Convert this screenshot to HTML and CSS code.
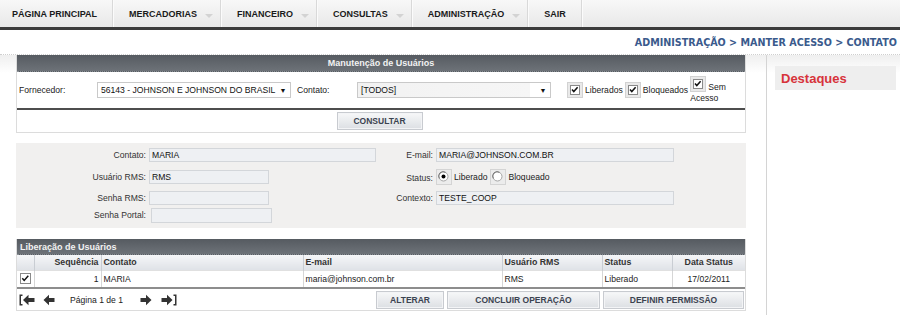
FILE: index.html
```html
<!DOCTYPE html>
<html lang="pt-BR">
<head>
<meta charset="utf-8">
<title>Manter Acesso - Contato</title>
<link rel="stylesheet" href="styles.css">
</head>
<body>
<nav class="nav">
  <a class="nav-item">PÁGINA PRINCIPAL</a>
  <a class="nav-item has-sub">MERCADORIAS<span class="caret"></span></a>
  <a class="nav-item has-sub">FINANCEIRO<span class="caret"></span></a>
  <a class="nav-item has-sub">CONSULTAS<span class="caret"></span></a>
  <a class="nav-item has-sub">ADMINISTRAÇÃO<span class="caret"></span></a>
  <a class="nav-item">SAIR</a>
</nav>
<div class="crumb">ADMINISTRAÇÃO &gt; MANTER ACESSO &gt; CONTATO</div>
<div class="page">
  <main class="main">
    <section class="panel filter">
      <div class="phead center">Manutenção de Usuários</div>
      <div class="frow">
        <span class="flabel l1">Fornecedor:</span>
        <div class="select s1"><span class="sel-text">56143 - JOHNSON E JOHNSON DO BRASIL</span><span class="sel-arrow">▼</span></div>
        <span class="flabel l2">Contato:</span>
        <div class="select s2"><span class="sel-text shaded">[TODOS]</span><span class="sel-arrow">▼</span></div>
        <div class="checks">
          <label class="chk"><svg class="cb" viewBox="0 0 16 16"><rect x="0.5" y="0.5" width="15" height="15" fill="#e9e9e9" stroke="#d2d2d2"/><rect x="3.5" y="3.5" width="9" height="9" fill="#fff" stroke="#8a8a8a"/><path d="M5 7.5 L6.8 9.6 L10.6 5.3" fill="none" stroke="#111" stroke-width="1.5"/></svg>Liberados</label>
          <label class="chk"><svg class="cb" viewBox="0 0 16 16"><rect x="0.5" y="0.5" width="15" height="15" fill="#e9e9e9" stroke="#d2d2d2"/><rect x="3.5" y="3.5" width="9" height="9" fill="#fff" stroke="#8a8a8a"/><path d="M5 7.5 L6.8 9.6 L10.6 5.3" fill="none" stroke="#111" stroke-width="1.5"/></svg>Bloqueados</label>
          <label class="chk wrap"><svg class="cb" viewBox="0 0 16 16"><rect x="0.5" y="0.5" width="15" height="15" fill="#e9e9e9" stroke="#d2d2d2"/><rect x="3.5" y="3.5" width="9" height="9" fill="#fff" stroke="#8a8a8a"/><path d="M5 7.5 L6.8 9.6 L10.6 5.3" fill="none" stroke="#111" stroke-width="1.5"/></svg>Sem Acesso</label>
        </div>
      </div>
      <div class="actions">
        <button class="btn consultar">CONSULTAR</button>
      </div>
    </section>

    <section class="detail">
      <span class="dl">Contato:</span>
      <div class="inp w-contato">MARIA</div>
      <span class="dl">E-mail:</span>
      <div class="inp w-email">MARIA@JOHNSON.COM.BR</div>

      <span class="dl">Usuário RMS:</span>
      <div class="inp w-short">RMS</div>
      <span class="dl dl-status">Status:</span>
      <div class="radios">
        <label class="rad"><svg class="rb" viewBox="0 0 16 16"><rect x="0.5" y="0.5" width="15" height="15" fill="#ececec" stroke="#d4d4d4"/><circle cx="7.5" cy="7.5" r="4.5" fill="#fff" stroke="#a5a5a5"/><path d="M3.3 9.5 A4.5 4.5 0 0 1 9.5 3.3" fill="none" stroke="#777"/><circle cx="7.5" cy="7.5" r="2" fill="#000"/></svg>Liberado</label>
        <label class="rad"><svg class="rb" viewBox="0 0 16 16"><rect x="0.5" y="0.5" width="15" height="15" fill="#ececec" stroke="#d4d4d4"/><circle cx="7.5" cy="7.5" r="4.5" fill="#fff" stroke="#a5a5a5"/><path d="M3.3 9.5 A4.5 4.5 0 0 1 9.5 3.3" fill="none" stroke="#777"/></svg>Bloqueado</label>
      </div>

      <span class="dl">Senha RMS:</span>
      <div class="inp w-short"></div>
      <span class="dl">Contexto:</span>
      <div class="inp w-email">TESTE_COOP</div>

      <span class="dl">Senha Portal:</span>
      <div class="inp w-portal"></div>
      <span></span>
      <span></span>
    </section>

    <section class="panel list">
      <div class="phead">Liberação de Usuários</div>
      <table class="grid">
        <colgroup>
          <col class="c-chk"><col class="c-seq"><col class="c-con"><col class="c-mail"><col class="c-usr"><col class="c-st"><col class="c-dt">
        </colgroup>
        <thead>
          <tr>
            <th></th>
            <th class="r">Sequência</th>
            <th>Contato</th>
            <th>E-mail</th>
            <th>Usuário RMS</th>
            <th>Status</th>
            <th class="c">Data Status</th>
          </tr>
        </thead>
        <tbody>
          <tr>
            <td class="chkcell"><svg class="tcb" viewBox="0 0 11 11"><rect x="0.5" y="0.5" width="10" height="10" fill="#fff" stroke="#8a8a8a"/><path d="M2.3 5.2 L4.2 7.4 L8.3 2.8" fill="none" stroke="#111" stroke-width="1.5"/></svg></td>
            <td class="r">1</td>
            <td>MARIA</td>
            <td>maria@johnson.com.br</td>
            <td>RMS</td>
            <td>Liberado</td>
            <td class="c">17/02/2011</td>
          </tr>
        </tbody>
      </table>
      <div class="pager">
        <div class="nav-icons">
          <svg class="pg first" viewBox="0 0 16 12"><path d="M0.5 0.5 H3.5 V2 H2 V10 H3.5 V11.5 H0.5 Z" fill="#333"/><path d="M4 6 L9.5 0.8 L9.5 4 L15.5 4 L15.5 8 L9.5 8 L9.5 11.2 Z" fill="#333"/></svg>
          <svg class="pg prev" viewBox="0 0 12 12"><path d="M0.5 6 L6 0.8 L6 4 L11.5 4 L11.5 8 L6 8 L6 11.2 Z" fill="#333"/></svg>
          <span class="pinfo">Página 1 de 1</span>
          <svg class="pg next" viewBox="0 0 12 12"><path d="M11.5 6 L6 0.8 L6 4 L0.5 4 L0.5 8 L6 8 L6 11.2 Z" fill="#333"/></svg>
          <svg class="pg last" viewBox="0 0 16 12"><path d="M11.5 6 L6 0.8 L6 4 L0.5 4 L0.5 8 L6 8 L6 11.2 Z" fill="#333"/><path d="M15.5 0.5 H12.5 V2 H14 V10 H12.5 V11.5 H15.5 Z" fill="#333"/></svg>
        </div>
        <div class="pbtns">
          <button class="btn b-alt">ALTERAR</button>
          <button class="btn b-conc">CONCLUIR OPERAÇÃO</button>
          <button class="btn b-def">DEFINIR PERMISSÃO</button>
        </div>
      </div>
    </section>
  </main>
  <aside class="side">
    <div class="dest">Destaques</div>
  </aside>
</div>
</body>
</html>
```
FILE: styles.css
```css
* { box-sizing: border-box; }
html, body { margin: 0; padding: 0; background: #fff; }
body {
  font-family: "Liberation Sans", Arial, sans-serif;
  font-size: 8.6px;
  color: #222;
  width: 900px;
  height: 315px;
  overflow: hidden;
}

/* top navigation */
.nav {
  display: flex;
  height: 30px;
  background: linear-gradient(#f8f8f8, #e8e8e8);
  border-bottom: 3px solid #3b3b3b;
}
.nav-item {
  display: flex;
  align-items: center;
  font-weight: bold;
  font-size: 9px;
  color: #1a1a1a;
  padding: 0 15px 0 12px;
  border-right: 1px solid #d9d9d9;
  box-shadow: 1px 0 0 #fbfbfb;
}
.nav-item + .nav-item { padding-left: 16px; }
.nav-item.has-sub { padding-right: 7px; }
.caret {
  display: inline-block;
  width: 0; height: 0;
  margin: 4px 0 0 8px;
  border-left: 4px solid transparent;
  border-right: 4px solid transparent;
  border-top: 4px solid #d3d3d3;
}
.nav-item:last-child { padding-right: 15px; }

/* breadcrumb */
.crumb {
  height: 24px;
  display: flex;
  align-items: center;
  justify-content: flex-end;
  padding-right: 3px;
  padding-top: 1px;
  font-family: "DejaVu Sans", Verdana, sans-serif;
  font-weight: bold;
  font-size: 9.6px;
  color: #3a5a8c;
}

/* page layout */
.page {
  display: flex;
  border-top: 1px dotted #cfcfcf;
  background: linear-gradient(#efefef, #fff 18px);
  height: 261px;
}
.main {
  width: 766px;
  padding: 0 20px 0 16px;
}
.side {
  flex: 1;
  border-left: 1px solid #d4d4d4;
  padding: 11px 4px 0 8px;
}
.dest {
  height: 24px;
  background: #eeeeee;
  color: #d7333b;
  font-weight: bold;
  font-size: 13px;
  padding-left: 6px;
  display: flex;
  align-items: center;
}

/* panels */
.panel {
  background: #fff;
  border: 1px solid #dcdcdc;
  border-top: 0;
}
.phead {
  height: 17px;
  background: linear-gradient(#565b61, #6d7278);
  color: #f2f2f2;
  font-weight: bold;
  font-size: 9px;
  display: flex;
  align-items: center;
  padding-left: 3px;
  border-bottom: 1px dotted #8a8f95;
}
.phead.center { justify-content: center; padding-left: 0; }

.frow {
  height: 38px;
  display: flex;
  align-items: center;
  padding-left: 2px;
  border-bottom: 2px solid #4d4d4d;
}
.flabel { display: inline-block; }
.l1 { width: 78px; }
.l2 { width: 60px; margin-left: 6px; }
.select {
  height: 16px;
  border: 1px solid #c9c9c9;
  background: #fff;
  display: flex;
  align-items: center;
}
.s1 { width: 194px; }
.s2 { width: 194px; }
.sel-text {
  flex: 1;
  min-width: 0;
  height: 100%;
  display: flex;
  align-items: center;
  padding-left: 3px;
  white-space: nowrap;
  overflow: hidden;
  color: #111;
}
.sel-text.shaded { background: linear-gradient(90deg, #f2f2f2, #f6f6f6); margin-right: 6px; }
.sel-arrow {
  flex: none;
  font-size: 7px;
  width: 14px;
  text-align: center;
  color: #111;
}
.checks {
  display: flex;
  align-items: center;
  margin-left: 16px;
}
.chk { display: inline-flex; align-items: center; margin-right: 2px; }
.cb { width: 16px; height: 16px; margin-right: 2px; }
.chk.wrap {
  display: inline-block;
  width: 46px;
  line-height: 11px;
  margin-right: 0;
}
.chk.wrap .cb { vertical-align: -2px; }

.actions {
  height: 22px;
  display: flex;
  align-items: center;
  justify-content: center;
}
.btn {
  font-family: "Liberation Sans", Arial, sans-serif;
  font-weight: bold;
  font-size: 8.5px;
  color: #3b4350;
  height: 18px;
  border: 1px solid #c8cbd0;
  background: linear-gradient(#f7f8f9, #dcdfe3);
  box-shadow: inset 0 0 0 1px #f3f4f6;
  padding: 0;
}
.consultar { width: 86px; margin-left: -3px; }

/* detail */
.detail {
  margin-top: 10px;
  background: #f1f0ef;
  height: 85px;
  padding-top: 5px;
  display: grid;
  grid-template-columns: 130px 227px 54px 238px;
  grid-template-rows: 22px 21px 17px 16px;
  column-gap: 3px;
  align-items: start;
}
.dl {
  text-align: right;
  line-height: 14px;
  color: #333;
}
.dl-status { line-height: 16px; }
.inp {
  height: 14px;
  background: #eef0f3;
  border: 1px solid #d3d6da;
  line-height: 12px;
  padding-left: 2px;
  color: #111;
}
.w-contato { width: 227px; }
.w-email { width: 238px; }
.w-short { width: 120px; }
.w-portal { width: 121px; height: 15px; margin-left: 2px; }
.radios { display: flex; align-items: center; margin-top: -1px; }
.rad { display: inline-flex; align-items: center; margin-right: 3px; }
.rb { width: 16px; height: 16px; margin-right: 2px; }

/* list */
.list { margin-top: 11px; }
.list .phead { height: 16px; }
.grid {
  width: 100%;
  border-collapse: collapse;
  table-layout: fixed;
}
.c-chk { width: 17px; }
.c-seq { width: 67px; }
.c-con { width: 202px; }
.c-mail { width: 199px; }
.c-usr { width: 100px; }
.c-st { width: 70px; }
.c-dt { width: 73px; }
.grid th {
  height: 15px;
  background: linear-gradient(#f5f6f8, #dfe2e7);
  font-weight: bold;
  text-align: left;
  padding: 0 2px;
  border-left: 1px solid #c9cdd3;
  color: #333;
  font-size: 8.8px;
}
.grid th:first-child { border-left: 0; }
.grid td {
  height: 17px;
  padding: 0 2px;
  border-left: 1px solid #d6d6d6;
  border-top: 1px solid #e0e0e0;
  color: #222;
  white-space: nowrap;
}
.grid td:first-child { border-left: 0; }
.grid .r { text-align: right; }
.grid .c { text-align: center; }
.chkcell { padding: 0 0 0 3px !important; }
.tcb { width: 11px; height: 11px; display: block; }

.pager {
  height: 23px;
  border-top: 2px solid #8d8d8d;
  display: flex;
  align-items: center;
  justify-content: space-between;
  padding: 0 1px 0 2px;
}
.nav-icons { display: flex; align-items: center; }
.pg { height: 12px; }
.pg.first { width: 16px; }
.pg.prev { width: 12px; margin-left: 8px; }
.pinfo { margin-left: 15px; width: 64px; }
.pg.next { width: 12px; margin-left: 6px; }
.pg.last { width: 16px; margin-left: 9px; }
.pbtns { display: flex; gap: 3px; }
.pbtns .btn { height: 18px; }
.b-alt { width: 68px; }
.b-conc { width: 153px; }
.b-def { width: 141px; }
```
